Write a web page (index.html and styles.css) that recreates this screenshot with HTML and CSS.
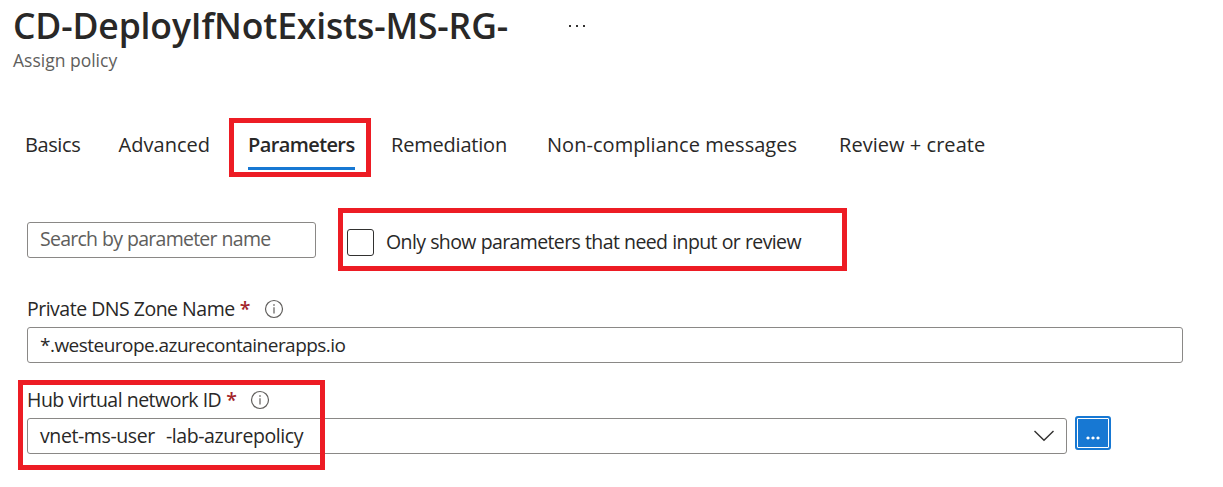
FILE: index.html
```
<!DOCTYPE html>
<html lang="en">
<head>
<meta charset="utf-8">
<title>Assign policy</title>
<link rel="stylesheet" href="styles.css">
</head>
<body>
<main class="page">
  <header class="header">
    <h1 class="title"><span class="title-text">CD-DeployIfNotExists-MS-RG-</span>
      <svg class="more" width="20" height="4" viewBox="0 0 20 4"><path d="M1 1h2v2H1zM8 1h2v2H8zM15 1h2v2h-2z" fill="#323130"/></svg>
    </h1>
    <p class="subtitle">Assign policy</p>
  </header>
  <nav class="tabs">
    <a class="tab tab-basics">Basics</a>
    <a class="tab tab-advanced">Advanced</a>
    <a class="tab tab-parameters active">Parameters<span class="mark mark-tab"></span></a>
    <a class="tab tab-remediation">Remediation</a>
    <a class="tab tab-messages">Non-compliance messages</a>
    <a class="tab tab-review">Review + create</a>
  </nav>
  <div class="filters">
    <div class="field search"><span class="search-text">Search by parameter name</span></div>
    <div class="only">
      <span class="checkbox"></span><span class="only-text">Only show parameters that need input or review</span>
    </div>
  </div>
  <div class="label label-dns"><span class="dns-text">Private DNS Zone Name</span><span class="star">*</span>
    <svg class="info" width="20" height="20" viewBox="0 0 20 20"><circle cx="10" cy="10" r="8.5" fill="none" stroke="#605e5c" stroke-width="1.2"/><path d="M9.3 5.3h1.4v1.5H9.3zM9.4 8.2h1.2v6.2H9.4z" fill="#605e5c"/></svg>
  </div>
  <div class="field dns"><span class="dns-value">*.westeurope.azurecontainerapps.io</span></div>
  <section class="hub">
    <div class="label"><span class="hub-text">Hub virtual network ID</span><span class="star">*</span>
      <svg class="info" width="20" height="20" viewBox="0 0 20 20"><circle cx="10" cy="10" r="8.5" fill="none" stroke="#605e5c" stroke-width="1.2"/><path d="M9.3 5.3h1.4v1.5H9.3zM9.4 8.2h1.2v6.2H9.4z" fill="#605e5c"/></svg>
    </div>
    <div class="hub-row">
      <div class="field select"><span class="user">vnet-ms-user</span><span class="lab">-lab-azurepolicy</span>
        <svg class="chevron" width="22" height="12" viewBox="0 0 22 12"><path d="M1.5 1 11 10.3 20.5 1" fill="none" stroke="#323130" stroke-width="1.4"/></svg>
      </div>
      <button class="browse"><svg width="14" height="4" viewBox="0 0 14 4"><path d="M2 .4a1.6 1.6 0 1 0 .01 0zM7 .4a1.6 1.6 0 1 0 .01 0zM12 .4a1.6 1.6 0 1 0 .01 0z" fill="#fff"/></svg></button>
    </div>
    <span class="mark mark-hub"></span>
  </section>
</main>
</body>
</html>
```
FILE: styles.css
```
* { box-sizing: border-box; }
body {
  margin: 0;
  background: #fff;
  color: #292827;
  font: 19.5px/28px "Open Sans", "Noto Sans", sans-serif;
  white-space: nowrap;
}
.page { width: 1223px; height: 487px; overflow: hidden; }
.header { height: 118px; padding: 3px 0 0 13px; }
.title { margin: 0; display: flex; align-items: center; font-size: 35.5px; line-height: 44px; font-weight: 600; }
.title-text { width: 555px; letter-spacing: -0.15px; }
.more { margin-top: 2px; }
.subtitle { margin: 0; font-size: 17.5px; line-height: 26px; color: #605e5c; letter-spacing: 0; }
.tabs { display: flex; height: 90px; padding-left: 25px; font-size: 20px; }
.tab { height: 52px; padding-top: 13px; letter-spacing: 0.04px; }
.tab-basics { width: 93.5px; letter-spacing: -0.4px; }
.tab-advanced { width: 129.5px; }
.tab-parameters { position: relative; width: 107px; margin-right: 36px; border-bottom: 3px solid #1778d3; font-weight: 600; letter-spacing: -0.6px; }
.tab-remediation { width: 156px; letter-spacing: -0.2px; }
.tab-messages { width: 292px; }
.mark { position: absolute; border: 5px solid #ed1c24; }
.mark-tab { left: -19px; top: 0; width: 142px; height: 59px; }
.filters { display: flex; align-items: flex-start; gap: 22px; height: 87px; padding-left: 27px; }
.field { display: flex; align-items: center; height: 36px; padding-left: 12px; border: 1px solid #8a8886; border-radius: 3px; }
.search { width: 289px; margin-top: 14px; padding-bottom: 2px; color: #605e5c; letter-spacing: -0.75px; word-spacing: 0.5px; }
.only { display: flex; align-items: center; width: 509px; height: 63px; padding: 5px 0 0 4px; border: 5px solid #ed1c24; }
.checkbox { width: 27px; height: 27px; margin-right: 12px; border: 1.5px solid #323130; border-radius: 3px; }
.only-text { letter-spacing: -0.62px; word-spacing: 0.4px; }
.label { display: flex; align-items: center; height: 28px; padding-left: 27px; letter-spacing: -0.5px; }
.star { margin-left: 5px; color: #a4262c; font-weight: 600; }
.info { margin-left: 14px; }
.dns { width: 1156px; margin: 4px 0 0 27px; }
.dns-value { font-size: 19px; letter-spacing: -0.53px; }
.hub { position: relative; margin-top: 23px; }
.hub-row { display: flex; gap: 8px; padding: 4px 0 0 27px; }
.select { width: 1040px; letter-spacing: -0.4px; }
.lab { margin-left: 11px; }
.chevron { margin: 0 11px 0 auto; }
.browse { display: flex; align-items: flex-end; justify-content: center; width: 36px; height: 34px; margin: -2px 0 0; padding: 0 0 8px; border: 2px solid #1778d3; border-radius: 3px; background: #1778d3; box-shadow: inset 0 0 0 1px #fff; }
.mark-hub { left: 18px; top: -6px; width: 307px; height: 90px; }
```
